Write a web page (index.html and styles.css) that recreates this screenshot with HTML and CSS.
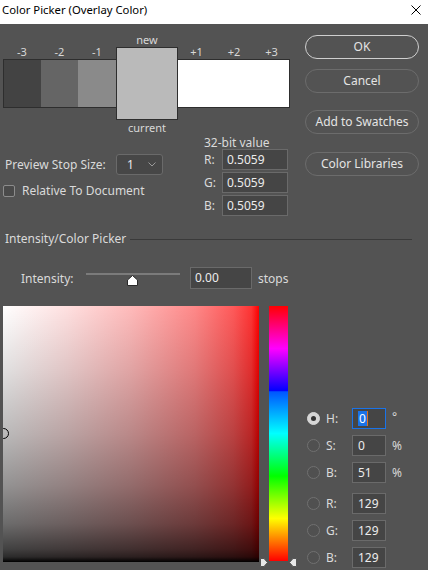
FILE: index.html
```html
<!DOCTYPE html>
<html lang="en">
<head>
  <meta charset="UTF-8" />
  <title>Color Picker (Overlay Color)</title>
  <link rel="stylesheet" href="styles.css">
</head>
<body>

<div class="titlebar">
  <span class="title">Color Picker (Overlay Color)</span>
  <svg class="close" width="10" height="10" viewBox="0 0 10 10">
    <path d="M0.5 0.5 L9.5 9.5 M9.5 0.5 L0.5 9.5" stroke="#000" stroke-width="1" fill="none"/>
  </svg>
</div>

<div class="dialog">
  <div class="top">
    <div class="top-left">
      <!-- preview stops -->
      <div class="swatches">
        <div class="stop first"><span class="stop-label">-3</span><div class="chip" style="background:#434343"></div></div>
        <div class="stop"><span class="stop-label">-2</span><div class="chip" style="background:#656565"></div></div>
        <div class="stop"><span class="stop-label">-1</span><div class="chip" style="background:#8a8a8a"></div></div>
        <div class="stop center">
          <span class="center-label">new</span>
          <div class="chip-big"></div>
          <span class="center-label">current</span>
        </div>
        <div class="stop"><span class="stop-label">+1</span><div class="chip" style="background:#fff"></div></div>
        <div class="stop"><span class="stop-label">+2</span><div class="chip" style="background:#fff"></div></div>
        <div class="stop last"><span class="stop-label">+3</span><div class="chip" style="background:#fff"></div></div>
      </div>

      <div class="options">
        <div class="stop-opts">
          <div class="stop-size">
            <span class="stop-size-label">Preview Stop Size:</span>
            <div class="select">
              <span>1</span>
              <svg width="8" height="5" viewBox="0 0 8 5"><path d="M0.5 0.5 L4 4 L7.5 0.5" stroke="#9a9a9a" stroke-width="1" fill="none"/></svg>
            </div>
          </div>
          <label class="check-row">
            <span class="checkbox"></span>
            <span>Relative To Document</span>
          </label>
        </div>
        <div class="bitvalues">
          <div class="bit-title">32-bit value</div>
          <div class="bit-row"><span class="bit-label">R:</span><div class="field-input">0.5059</div></div>
          <div class="bit-row"><span class="bit-label">G:</span><div class="field-input">0.5059</div></div>
          <div class="bit-row"><span class="bit-label">B:</span><div class="field-input">0.5059</div></div>
        </div>
      </div>
    </div>

    <div class="top-right">
      <button class="btn primary">OK</button>
      <button class="btn cancel">Cancel</button>
      <button class="btn swatches-btn">Add to Swatches</button>
      <button class="btn libraries">Color Libraries</button>
    </div>
  </div>

  <div class="section">
    <span>Intensity/Color Picker</span>
    <div class="section-line"></div>
  </div>

  <div class="intensity">
    <span class="intensity-label">Intensity:</span>
    <div class="slider">
      <div class="track"></div>
      <svg class="thumb" width="11" height="11" viewBox="0 0 11 11">
        <path d="M5.5 0.5 L10.5 5 L10.5 10.5 L0.5 10.5 L0.5 5 Z" fill="#fff" stroke="#2a2a2a" stroke-width="1"/>
      </svg>
    </div>
    <div class="field-input intensity-input">0.00</div>
    <span class="unit">stops</span>
  </div>

  <div class="picker">
    <div class="color-field">
      <div class="marker"></div>
    </div>
    <div class="hue-wrap">
      <div class="hue-bar"></div>
      <svg class="arrow arrow-left" width="8" height="9" viewBox="0 0 8 9">
        <path d="M0.5 0.5 L4 0.5 L7.5 4.5 L4 8.5 L0.5 8.5 Z" fill="#e8e8e8" stroke="#555" stroke-width="1"/>
      </svg>
      <svg class="arrow arrow-right" width="8" height="9" viewBox="0 0 8 9">
        <path d="M7.5 0.5 L4 0.5 L0.5 4.5 L4 8.5 L7.5 8.5 Z" fill="#e8e8e8" stroke="#555" stroke-width="1"/>
      </svg>
    </div>

    <div class="controls">
      <div class="ctl-row">
        <span class="radio on"></span><span class="ctl-label">H:</span>
        <div class="field-input ctl-input focus"><span class="sel">0</span><span class="caret"></span></div>
        <span class="ctl-unit deg">°</span>
      </div>
      <div class="ctl-row">
        <span class="radio"></span><span class="ctl-label">S:</span>
        <div class="field-input ctl-input">0</div>
        <span class="ctl-unit">%</span>
      </div>
      <div class="ctl-row">
        <span class="radio"></span><span class="ctl-label">B:</span>
        <div class="field-input ctl-input">51</div>
        <span class="ctl-unit">%</span>
      </div>
      <div class="ctl-row rgb-start">
        <span class="radio"></span><span class="ctl-label">R:</span>
        <div class="field-input ctl-input">129</div>
      </div>
      <div class="ctl-row">
        <span class="radio"></span><span class="ctl-label">G:</span>
        <div class="field-input ctl-input">129</div>
      </div>
      <div class="ctl-row">
        <span class="radio"></span><span class="ctl-label">B:</span>
        <div class="field-input ctl-input">129</div>
      </div>
    </div>
  </div>
</div>

</body>
</html>
```

FILE: styles.css
```css
* {
  box-sizing: border-box;
}
body {
  margin: 0;
  width: 428px;
  height: 570px;
  overflow: hidden;
  background: #535353;
  font-family: 'Noto Sans', 'Open Sans', sans-serif;
  font-size: 12px;
  color: #dadada;
}

/* window title */
.titlebar {
  height: 24px;
  background: #fff;
  display: flex;
  align-items: center;
  justify-content: space-between;
  padding: 0 7px 5px 2px;
}
.title {
  color: #000;
  font-size: 11.3px;
  line-height: 14px;
}

/* top area */
.top {
  display: flex;
}
.top-left {
  width: 290px;
}
.top-right {
  margin-left: 15px;
  width: 114px;
  display: flex;
  flex-direction: column;
  padding-top: 11px;
}
.btn {
  height: 24px;
  border-radius: 12px;
  background: transparent;
  border: 1px solid #6c6c6c;
  color: #e4e4e4;
  font-family: inherit;
  font-size: 12px;
  padding: 0;
  line-height: 20px;
}
.btn.primary {
  border: 1.5px solid #cfcfcf;
}
.btn.cancel { margin-top: 10px; }
.btn.swatches-btn { margin-top: 17px; }
.btn.libraries { margin-top: 18px; }

.swatches {
  display: flex;
  align-items: flex-start;
  padding: 9px 0 0 3px;
}
.stop {
  display: flex;
  flex-direction: column;
  align-items: center;
  width: 38px;
  padding-top: 12px;
}
.stop:nth-child(2), .stop:nth-child(5), .stop:nth-child(7) { width: 37px; }
.stop-label, .center-label {
  line-height: 14px;
  height: 14px;
  font-size: 11px;
  color: #d8d8d8;
}
.chip {
  width: 100%;
  height: 49px;
  border-top: 1px solid #2e2e2e;
  border-bottom: 1px solid #2e2e2e;
}
.stop.first .chip { border-left: 1px solid #2e2e2e; }
.stop.last .chip { border-right: 1px solid #2e2e2e; }
.stop.center {
  width: 62px;
  padding-top: 0;
}
.chip-big {
  width: 62px;
  height: 73px;
  background: #bababa;
  border: 1px solid #2e2e2e;
  margin-bottom: 1px;
}

.options {
  display: grid;
  grid-template-columns: 204px 84px;
}
.stop-opts {
  padding-top: 19px;
}
.stop-size {
  display: flex;
  align-items: center;
  padding-left: 5px;
}
.stop-size-label {
  width: 111px;
}
.select {
  width: 47px;
  height: 21px;
  border: 1px solid #6a6a6a;
  border-radius: 3px;
  background: #474747;
  display: flex;
  align-items: center;
  justify-content: space-between;
  padding: 0 6px 0 10px;
  color: #e8e8e8;
}
.check-row {
  display: flex;
  align-items: center;
  gap: 7px;
  margin-top: 7px;
  padding-left: 3px;
}
.checkbox {
  width: 12px;
  height: 12px;
  border: 1px solid #8c8c8c;
  border-radius: 2px;
  background: #4a4a4a;
}

.bitvalues {
  padding-top: 1px;
}
.bit-title {
  line-height: 13px;
  height: 13px;
}
.bit-row {
  display: flex;
  align-items: center;
  margin-bottom: 2px;
}
.bit-label {
  width: 18px;
}
.field-input {
  height: 21px;
  border: 1px solid #6a6a6a;
  background: #454545;
  color: #ececec;
  line-height: 19px;
  padding-left: 4px;
}
.bit-row .field-input {
  width: 66px;
}

/* section header */
.section {
  display: flex;
  align-items: center;
  margin-top: 14px;
  padding: 0 16px 0 5px;
  line-height: 14px;
}
.section-line {
  flex: 1;
  height: 1px;
  background: #3a3a3a;
  margin-left: 4px;
}

/* intensity */
.intensity {
  display: flex;
  align-items: center;
  margin-top: 21px;
  height: 22px;
  padding-left: 21px;
}
.intensity-label {
  width: 65px;
}
.slider {
  position: relative;
  width: 94px;
  height: 22px;
}
.track {
  margin-top: 6px;
  height: 2px;
  background: #7b7b7b;
}
.thumb {
  position: absolute;
  left: 41px;
  top: 8px;
}
.intensity-input {
  width: 62px;
  height: 22px;
  margin-left: 10px;
}
.unit {
  margin-left: 6px;
}

/* color picker: saturation / brightness drawn with display gamma */
.picker {
  display: flex;
  align-items: flex-start;
  margin-top: 17px;
}
.color-field {
  position: relative;
  overflow: hidden;
  width: 256px;
  height: 256px;
  margin-left: 3px;
  background:
    linear-gradient(to bottom,
      rgba(0, 0, 0, 0) 0%,
      rgba(0, 0, 0, 0.123) 25%,
      rgba(0, 0, 0, 0.27) 50%,
      rgba(0, 0, 0, 0.422) 70%,
      rgba(0, 0, 0, 0.578) 85%,
      rgba(0, 0, 0, 0.744) 95%,
      rgba(0, 0, 0, 0.831) 98%,
      #000 100%),
    linear-gradient(to right,
      #fff 0%,
      #ffe0e0 25%,
      #ffbaba 50%,
      #ff8888 75%,
      #ff5959 90%,
      #ff3434 97%,
      #f00 100%);
}
.marker {
  position: absolute;
  left: -5px;
  top: 122px;
  width: 11px;
  height: 11px;
  border: 1px solid #000;
  border-radius: 50%;
}
.hue-wrap {
  position: relative;
  margin-left: 10px;
}
.hue-bar {
  width: 19px;
  height: 255px;
  background: linear-gradient(to bottom, #f00, #f0f 16.7%, #00f 33.3%, #0055ff 33.6%, #0ff 50%, #0f0 66.7%, #ff0 83.3%, #f00);
}
.arrow {
  position: absolute;
  top: 252px;
}
.arrow-left { left: -9px; }
.arrow-right { left: 20px; }

.controls {
  margin-left: 19px;
  margin-top: 101px;
  display: flex;
  flex-direction: column;
  gap: 5px;
}
.ctl-row {
  display: flex;
  align-items: center;
  height: 22px;
}
.ctl-row.rgb-start {
  margin-top: 4px;
}
.radio {
  width: 13px;
  height: 13px;
  border-radius: 50%;
  border: 1px solid #707070;
  background: #505050;
}
.radio.on {
  background: #d6d6d6;
  border-color: #d6d6d6;
  display: flex;
  align-items: center;
  justify-content: center;
}
.radio.on::after {
  content: "";
  width: 5px;
  height: 5px;
  border-radius: 50%;
  background: #333;
}
.ctl-label {
  width: 26px;
  margin-left: 6px;
}
.ctl-input {
  width: 34px;
  height: 21px;
  padding-left: 5px;
}
.ctl-input.focus {
  border: 1px solid #1a73e8;
  display: flex;
  align-items: center;
}
.sel {
  background: #1a73e8;
  color: #fff;
  line-height: 15px;
  padding: 0 1px;
}
.caret {
  width: 1px;
  height: 15px;
  background: #e07020;
}
.ctl-unit {
  margin-left: 6px;
  color: #d8d8d8;
}
.ctl-unit.deg {
  align-self: flex-start;
  margin-top: 1px;
}
```
